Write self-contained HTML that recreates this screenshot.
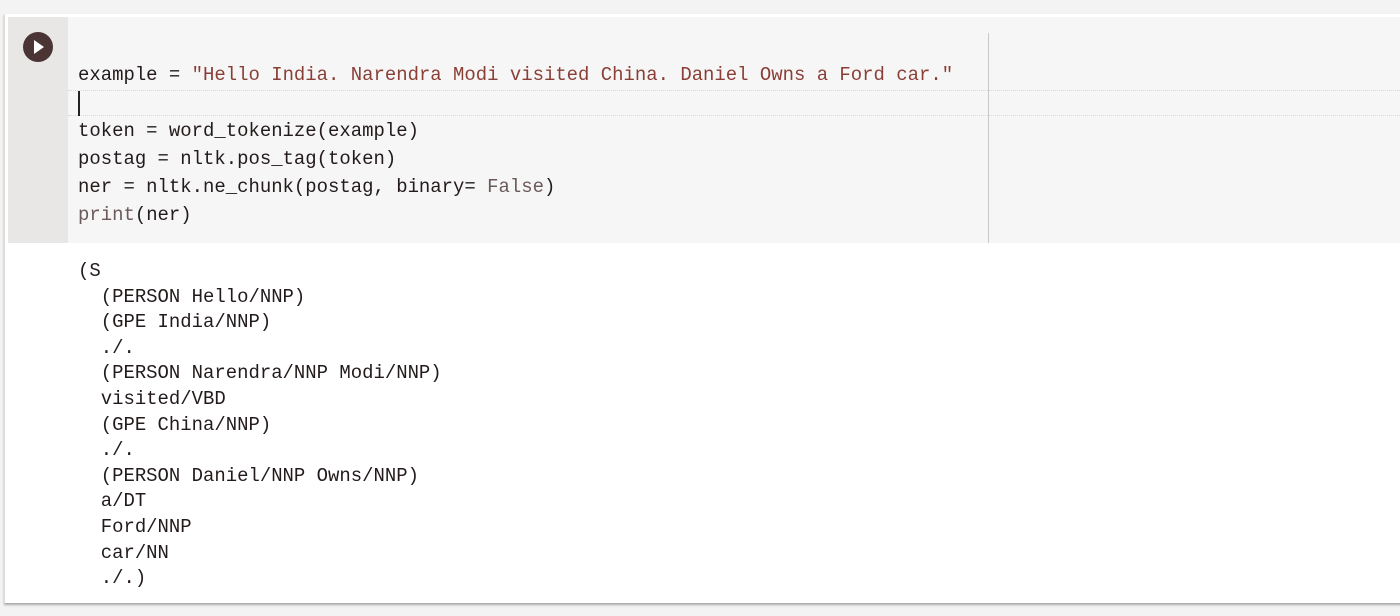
<!DOCTYPE html>
<html><head><meta charset="utf-8"><style>
html,body{margin:0;padding:0;background:#f3f3f3;width:1400px;height:616px;overflow:hidden}
.card{position:absolute;left:4px;top:14px;width:1400px;height:589px;background:#fff;border-left:1px solid #ddd;box-shadow:0 2px 2px #aaa}
.gutter{position:absolute;left:8px;top:17px;width:60px;height:226px;background:#e9e7e6}
.code{position:absolute;left:68px;top:17px;width:1332px;height:226px;background:#f6f6f6}
.play{position:absolute;left:23px;top:32px;width:30px;height:30px;border-radius:50%;background:#4a3434}
.play:after{content:"";position:absolute;left:11px;top:8px;border-left:10px solid #fff;border-top:7px solid transparent;border-bottom:7px solid transparent}
.vl{position:absolute;left:988px;top:33px;width:1px;height:210px;background:#c8c8c8}
.hl{position:absolute;left:68px;width:1332px;height:0;border-top:1px dotted #d6d6d6}
pre{margin:0;position:absolute;left:78px;font-family:"Liberation Mono",monospace;font-size:18.95px;color:#231b1b}
.c{top:61px;line-height:28px}
.o{top:259px;line-height:25.6px}
.s{color:#8a3f36}.k{color:#6c5a5a}
.cur{position:absolute;left:78px;top:91px;width:2px;height:25px;background:#222}
</style></head><body>
<div class="card"></div>
<div class="gutter"></div>
<div class="code"></div>
<div class="play"></div>
<div class="hl" style="top:90px"></div>
<div class="hl" style="top:115px"></div>
<div class="vl"></div>
<div class="cur"></div>
<pre class="c">example = <span class="s">"Hello India. Narendra Modi visited China. Daniel Owns a Ford car."</span>

token = word_tokenize(example)
postag = nltk.pos_tag(token)
ner = nltk.ne_chunk(postag, binary= <span class="k">False</span>)
<span class="k">print</span>(ner)</pre>
<pre class="o">(S
  (PERSON Hello/NNP)
  (GPE India/NNP)
  ./.
  (PERSON Narendra/NNP Modi/NNP)
  visited/VBD
  (GPE China/NNP)
  ./.
  (PERSON Daniel/NNP Owns/NNP)
  a/DT
  Ford/NNP
  car/NN
  ./.)</pre>
</body></html>
